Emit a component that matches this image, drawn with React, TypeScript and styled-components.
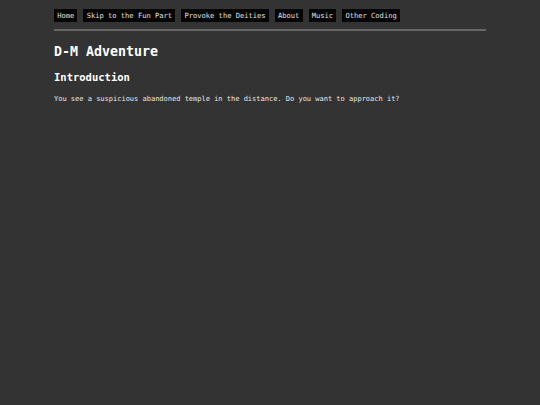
import { ReactElement } from 'react';
import styled, { createGlobalStyle } from 'styled-components';

const GlobalStyle = createGlobalStyle`
	html, body {
		margin: 0;
		padding: 0;
		background: #333333;
		min-height: 100%;
	}
	body {
		font-family: "DejaVu Sans Mono", "Liberation Mono", monospace;
		color: #e8e8e8;
		-webkit-font-smoothing: antialiased;
	}
`;

const Page = styled.div`
	width: 432px;
	margin: 0 auto;
	padding-top: 9px;
`;

const Nav = styled.nav`
	display: flex;
	gap: 6px;
	padding-bottom: 7px;
	border-bottom: 2px solid #666666;
`;

const NavLink = styled.a`
	display: block;
	background: #050505;
	color: #e0e0e0;
	font-size: 7.1px;
	line-height: 7px;
	padding: 3px 3.2px;
	text-decoration: none;
`;

const Title = styled.h1`
	margin: 13px 0 0;
	font-size: 13.3px;
	line-height: 16px;
	font-weight: bold;
	color: #ffffff;
`;

const Section = styled.h2`
	margin: 11px 0 0;
	font-size: 10.5px;
	line-height: 13px;
	font-weight: bold;
	color: #ffffff;
`;

const Para = styled.p`
	margin: 11px 0 0;
	font-size: 7px;
	line-height: 9px;
	color: #e8e8e8;
`;

const links = [
	'Home',
	'Skip to the Fun Part',
	'Provoke the Deities',
	'About',
	'Music',
	'Other Coding',
];

export default function App(): ReactElement {
	return (
		<>
			<GlobalStyle />
			<Page>
				<Nav>
					{links.map((l) => (
						<NavLink href="#" key={l}>
							{l}
						</NavLink>
					))}
				</Nav>
				<Title>D-M Adventure</Title>
				<Section>Introduction</Section>
				<Para>
					You see a suspicious abandoned temple in the distance. Do you want to
					approach it?
				</Para>
			</Page>
		</>
	);
}
